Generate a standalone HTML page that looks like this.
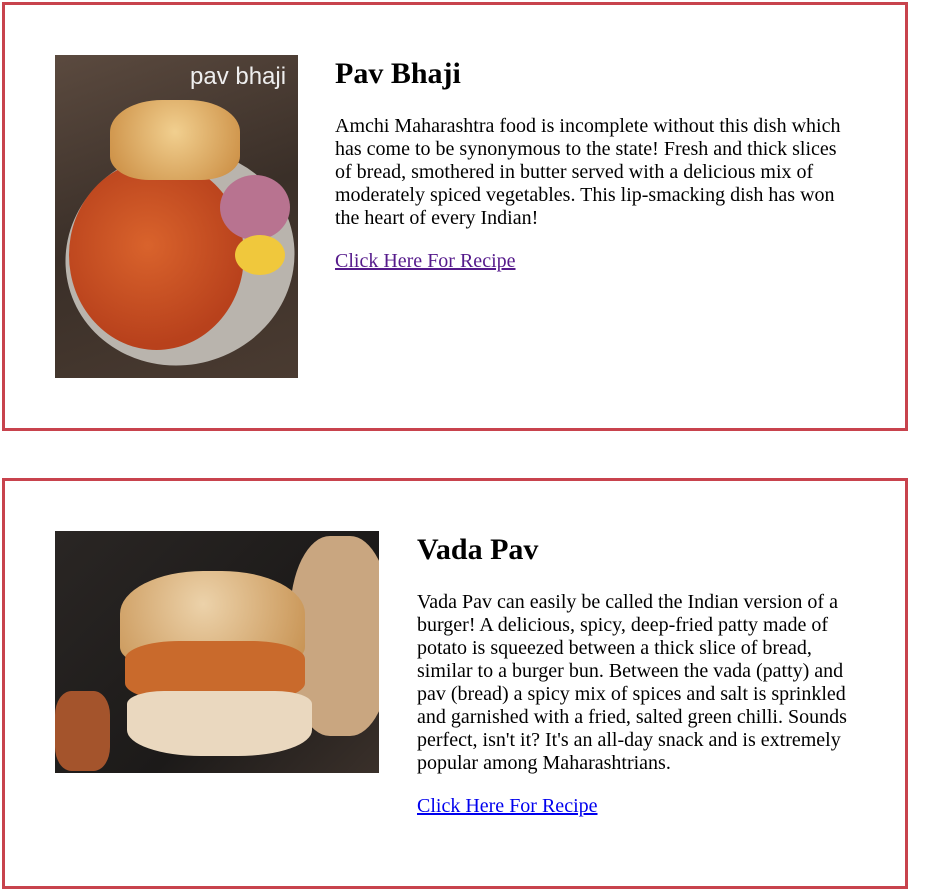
<!DOCTYPE html>
<html><head><meta charset="utf-8"><style>
body{margin:0;background:#fff;font-family:"Liberation Serif",serif;color:#000;}
.card{position:absolute;left:2px;width:900px;border:3px solid #c8434d;box-sizing:content-box;}
.img{position:absolute;overflow:hidden;}
.t{position:absolute;}
h2{margin:0;font-size:30px;font-weight:bold;line-height:32px;}
p{margin:0;font-size:20px;line-height:23px;}
a{font-size:20px;line-height:23px;text-decoration:underline;}
</style></head><body>
<div class="card" style="top:2px;height:423px;"></div>
<div class="card" style="top:478px;height:405px;"></div>

<div class="img" style="left:55px;top:55px;width:243px;height:323px;background:linear-gradient(160deg,#5b4a3f,#3a2f28 50%,#4a3b31);">
 <div style="position:absolute;left:10px;top:95px;width:230px;height:215px;border-radius:50%;background:#b9b4ad;transform:rotate(-15deg);"></div>
 <div style="position:absolute;left:14px;top:105px;width:175px;height:190px;border-radius:50%;background:radial-gradient(circle at 45% 45%,#d9632c,#b8411c 70%);"></div>
 <div style="position:absolute;left:55px;top:45px;width:130px;height:80px;border-radius:40% 40% 30% 30%;background:radial-gradient(circle at 50% 40%,#f1cf8f,#c98a3f);"></div>
 <div style="position:absolute;left:165px;top:120px;width:70px;height:65px;border-radius:50%;background:#b87390;"></div>
 <div style="position:absolute;left:180px;top:180px;width:50px;height:40px;border-radius:50%;background:#f0c83c;"></div>
 <div style="position:absolute;left:135px;top:8px;color:#eee;font-size:24px;font-family:'Liberation Sans',sans-serif;">pav bhaji</div>
</div>
<div class="t" style="left:335px;top:58px;width:515px;">
 <h2>Pav Bhaji</h2>
 <p style="margin-top:25px;">Amchi Maharashtra food is incomplete without this dish which has come to be synonymous to the state! Fresh and thick slices of bread, smothered in butter served with a delicious mix of moderately spiced vegetables. This lip-smacking dish has won the heart of every Indian!</p>
 <p style="margin-top:20px;"><a style="color:#551a8b;">Click Here For Recipe</a></p>
</div>

<div class="img" style="left:55px;top:531px;width:324px;height:242px;background:linear-gradient(135deg,#2a2624,#1c1a19 60%,#3a302a);">
 <div style="position:absolute;left:235px;top:5px;width:100px;height:200px;border-radius:40%;background:#c9a680;"></div>
 <div style="position:absolute;left:65px;top:40px;width:185px;height:95px;border-radius:45% 45% 20% 20%;background:radial-gradient(circle at 45% 35%,#ecd2aa,#c6904f);"></div>
 <div style="position:absolute;left:70px;top:110px;width:180px;height:60px;background:#c96a2c;border-radius:30%;"></div>
 <div style="position:absolute;left:72px;top:160px;width:185px;height:65px;border-radius:20% 20% 40% 40%;background:#ead8bf;"></div>
 <div style="position:absolute;left:0px;top:160px;width:55px;height:80px;background:#a4542c;border-radius:30%;"></div>
</div>
<div class="t" style="left:417px;top:534px;width:440px;">
 <h2>Vada Pav</h2>
 <p style="margin-top:25px;">Vada Pav can easily be called the Indian version of a burger! A delicious, spicy, deep-fried patty made of potato is squeezed between a thick slice of bread, similar to a burger bun. Between the vada (patty) and pav (bread) a spicy mix of spices and salt is sprinkled and garnished with a fried, salted green chilli. Sounds perfect, isn't it? It's an all-day snack and is extremely popular among Maharashtrians.</p>
 <p style="margin-top:20px;"><a style="color:#0000ee;">Click Here For Recipe</a></p>
</div>
</body></html>
